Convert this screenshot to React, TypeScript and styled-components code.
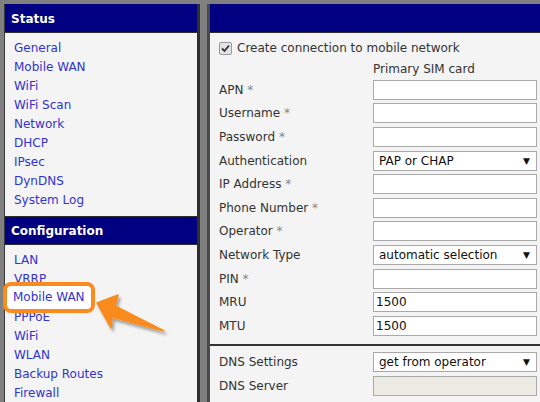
import React from "react";
import styled, { createGlobalStyle } from "styled-components";

const Global = createGlobalStyle`
  html, body { margin: 0; padding: 0; background: #808080; overflow: hidden; }
  body { font-family: "DejaVu Sans", Verdana, sans-serif; font-size: 12px; }
  #root { width: 540px; height: 402px; overflow: hidden; }
`;

const Page = styled.div`
  display: flex;
  align-items: flex-start;
  gap: 7px;
  padding: 4px 0 0 4px;
  width: 900px;
  height: 402px;
  box-sizing: border-box;
`;

const SidePanel = styled.div`
  position: relative;
  width: 196px;
  flex: none;
  box-sizing: border-box;
  background: #f4f4f4;
  border-left: 1px solid #3a3a3a;
  border-right: 3px solid #2e2e2e;
  height: 420px;
`;

const SectionHeader = styled.div<{ $first?: boolean }>`
  height: 27px;
  background: #000080;
  color: #fff;
  font-weight: bold;
  font-size: 12px;
  display: flex;
  align-items: center;
  padding-left: 6px;
  border-top: 1px solid ${(p) => (p.$first ? "#000080" : "#2e2e2e")};
  border-bottom: 1px solid #2e2e2e;
`;

const LinkList = styled.ul`
  list-style: none;
  margin: 0;
  padding: 6px 0 6px 9px;
`;

const LinkItem = styled.li`
  height: 19px;
  line-height: 19px;
  color: #3333cc;
  white-space: nowrap;
`;

const Highlight = styled.div`
  position: absolute;
  left: -2px;
  top: 278px;
  width: 78px;
  height: 23px;
  border: 4px solid #f98b1f;
  border-radius: 8px;
  background: #ffffff;
  color: #3333cc;
  line-height: 23px;
  padding-left: 6px;
  white-space: nowrap;
  box-sizing: content-box;
`;

const Arrow = styled.svg`
  position: absolute;
  left: 0;
  top: 0;
  overflow: visible;
  pointer-events: none;
`;

const MainPanel = styled.div`
  width: 420px;
  flex: none;
  box-sizing: border-box;
  background: #f4f4f4;
  border-left: 3px solid #4a4a4a;
  height: 420px;
`;

const MainHeader = styled.div`
  height: 27px;
  background: #000080;
  border-top: 1px solid #000080;
  border-bottom: 1px solid #2e2e2e;
`;

const Form = styled.div`
  padding: 7px 0 0 9px;
  color: #333;
`;

const CheckRow = styled.div`
  display: flex;
  align-items: center;
  gap: 5px;
  height: 16px;
`;

const CheckBox = styled.span`
  width: 13px;
  height: 13px;
  box-sizing: border-box;
  border: 1px solid #9a9a9a;
  border-radius: 2px;
  background: #e4e4e4;
  display: flex;
  align-items: center;
  justify-content: center;
`;

const ColHead = styled.div`
  margin: 4px 0 0 154px;
  height: 18px;
  line-height: 18px;
`;

const Grid = styled.div`
  display: grid;
  grid-template-columns: 154px 164px;
  grid-auto-rows: 23.6px;
  align-items: center;
`;

const Label = styled.div`
  white-space: nowrap;
`;

const Star = styled.span`
  color: #888;
`;

const Field = styled.div<{ $disabled?: boolean }>`
  height: 20px;
  box-sizing: border-box;
  border: 1px solid #a9a9a9;
  background: ${(p) => (p.$disabled ? "#ebebe4" : "#fff")};
  display: flex;
  align-items: center;
  padding-left: 2px;
  color: #111;
  white-space: nowrap;
`;

const SelectBox = styled(Field)`
  justify-content: space-between;
  padding: 0 6px 0 5px;
`;

const Caret = styled.span`
  font-size: 9px;
  color: #111;
`;

const Separator = styled.div`
  height: 2px;
  background: #333;
  margin: 6px 0 5px -9px;
`;

type Row = { label: string; star?: boolean; kind?: "input" | "select" | "disabled"; value?: string };

const rows: Row[] = [
  { label: "APN", star: true },
  { label: "Username", star: true },
  { label: "Password", star: true },
  { label: "Authentication", kind: "select", value: "PAP or CHAP" },
  { label: "IP Address", star: true },
  { label: "Phone Number", star: true },
  { label: "Operator", star: true },
  { label: "Network Type", kind: "select", value: "automatic selection" },
  { label: "PIN", star: true },
  { label: "MRU", value: "1500" },
  { label: "MTU", value: "1500" },
];

const dnsRows: Row[] = [
  { label: "DNS Settings", kind: "select", value: "get from operator" },
  { label: "DNS Server", kind: "disabled" },
];

const renderRow = (r: Row) => (
  <React.Fragment key={r.label}>
    <Label>
      {r.label}
      {r.star && <Star> *</Star>}
    </Label>
    {r.kind === "select" ? (
      <SelectBox>
        <span>{r.value}</span>
        <Caret>▼</Caret>
      </SelectBox>
    ) : (
      <Field $disabled={r.kind === "disabled"}>{r.value}</Field>
    )}
  </React.Fragment>
);

const statusLinks = ["General", "Mobile WAN", "WiFi", "WiFi Scan", "Network", "DHCP", "IPsec", "DynDNS", "System Log"];
const configLinks = ["LAN", "VRRP", "Mobile WAN", "PPPoE", "WiFi", "WLAN", "Backup Routes", "Firewall"];

export default function App() {
  return (
    <>
      <Global />
      <Page>
        <SidePanel>
          <SectionHeader $first>Status</SectionHeader>
          <LinkList>
            {statusLinks.map((l) => (
              <LinkItem key={l}>{l}</LinkItem>
            ))}
          </LinkList>
          <SectionHeader>Configuration</SectionHeader>
          <LinkList>
            {configLinks.map((l, i) => (
              <LinkItem key={l + i}>{l}</LinkItem>
            ))}
          </LinkList>
          <Highlight>Mobile WAN</Highlight>
          <Arrow width="196" height="400" viewBox="0 0 196 400">
            <defs>
              <filter id="sh" x="-20%" y="-20%" width="150%" height="150%">
                <feDropShadow dx="2" dy="3" stdDeviation="1.5" floodColor="#000" floodOpacity="0.35" />
              </filter>
            </defs>
            <path
              d="M92 299 L113 291 L110 302 L159 327 L107 313 L106 324 Z"
              fill="#f98b1f"
              stroke="#f98b1f"
              strokeWidth="1.5"
              strokeLinejoin="round"
              filter="url(#sh)"
            />
          </Arrow>
        </SidePanel>
        <MainPanel>
          <MainHeader />
          <Form>
            <CheckRow>
              <CheckBox>
                <svg width="9" height="9" viewBox="0 0 9 9">
                  <path d="M1 4.5 L3.5 7 L8 1.5" fill="none" stroke="#333" strokeWidth="1.8" />
                </svg>
              </CheckBox>
              Create connection to mobile network
            </CheckRow>
            <ColHead>Primary SIM card</ColHead>
            <Grid>{rows.map(renderRow)}</Grid>
            <Separator />
            <Grid>{dnsRows.map(renderRow)}</Grid>
          </Form>
        </MainPanel>
      </Page>
    </>
  );
}
